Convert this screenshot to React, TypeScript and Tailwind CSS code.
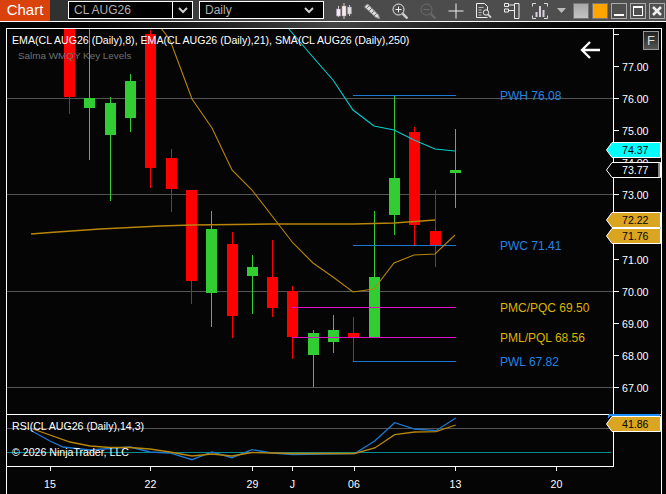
import React from 'react';

const FONT = "font-['Liberation_Sans',Arial,sans-serif]";

type Candle = { x: number; up: boolean; hi: number; lo: number; top: number; bot: number };

const candles: Candle[] = [
  { x: 69.5, up: false, hi: 29, lo: 114, top: 29, bot: 97 },
  { x: 89.5, up: true, hi: 29, lo: 160, top: 98, bot: 108 },
  { x: 110.5, up: true, hi: 97, lo: 201, top: 103, bot: 135 },
  { x: 130.5, up: true, hi: 74, lo: 132, top: 81, bot: 118 },
  { x: 150.5, up: false, hi: 30, lo: 188, top: 34, bot: 168 },
  { x: 171.5, up: false, hi: 149, lo: 212, top: 158, bot: 189 },
  { x: 191.5, up: false, hi: 190, lo: 304, top: 190, bot: 281 },
  { x: 211.5, up: true, hi: 211, lo: 327, top: 229, bot: 293 },
  { x: 232.5, up: false, hi: 232, lo: 338, top: 244, bot: 316 },
  { x: 252.5, up: true, hi: 255, lo: 314, top: 267, bot: 276 },
  { x: 272.5, up: false, hi: 240, lo: 317, top: 277, bot: 308 },
  { x: 292.5, up: false, hi: 286, lo: 359, top: 291, bot: 337 },
  { x: 313.5, up: true, hi: 330, lo: 387, top: 333, bot: 355 },
  { x: 333.5, up: true, hi: 315, lo: 353, top: 330, bot: 342 },
  { x: 353.5, up: false, hi: 317, lo: 361, top: 333, bot: 337 },
  { x: 374.5, up: true, hi: 211, lo: 337, top: 277, bot: 337 },
  { x: 394.5, up: true, hi: 96, lo: 235, top: 178, bot: 215 },
  { x: 414.5, up: false, hi: 127, lo: 245, top: 132, bot: 225 },
  { x: 435.5, up: false, hi: 190, lo: 267, top: 231, bot: 245 },
  { x: 455.5, up: true, hi: 129, lo: 208, top: 170, bot: 173 },
];

const ema21 = '288,28 312,56 333,80 353,110 374,126 394,130 414,140 435,149 455,151';
const ema8 =
  '161,28 170,40 192,99 212,128 232,170 252,190 293,243 313,263 333,277 353,292 374,289 394,263 414,255 435,254 455,235';
const sma = '31,234 50,232.5 100,229 160,226 192,225 270,224 353,224 394,223 435,220';
const rsiBlue =
  '30,430 50,441 63,447 90,450 130,447 150,452 170,453 192,459.7 212,452 232,457.7 252,449.7 272,453 293,454.5 354.7,453.5 374.7,441 394.7,422.7 414.7,429 436,430.7 455.7,418';
const rsiOrange =
  '33,429 70,442 90,446 110,447.5 130,447.5 150,449 170,452 192,456 212,454 232,456 252,452.5 273,453 293,453.5 354.7,453.5 374.7,448 394.7,434.7 414.7,432 436,431.7 455.7,425';

const priceTicks = [
  { label: '77.00', y: 66 },
  { label: '76.00', y: 98 },
  { label: '75.00', y: 130 },
  { label: '74.00', y: 162 },
  { label: '73.00', y: 194 },
  { label: '71.00', y: 259 },
  { label: '70.00', y: 291 },
  { label: '69.00', y: 323 },
  { label: '68.00', y: 355 },
  { label: '67.00', y: 387 },
];

const dateTicks = [
  { label: '15', x: 50 },
  { label: '22', x: 150.5 },
  { label: '29', x: 252.5 },
  { label: 'J', x: 292.5 },
  { label: '06', x: 354 },
  { label: '13', x: 455.5 },
  { label: '20', x: 556.5 },
];

const levels = [
  { text: 'PWH 76.08', y: 95.5, cls: 'text-[#2484e4]' },
  { text: 'PWC 71.41', y: 245.5, cls: 'text-[#2484e4]' },
  { text: 'PMC/PQC 69.50', y: 307.5, cls: 'text-[#dcb400]' },
  { text: 'PML/PQL 68.56', y: 337.5, cls: 'text-[#dcb400]' },
  { text: 'PWL 67.82', y: 361.5, cls: 'text-[#2484e4]' },
];

const tags = [
  { label: '74.37', top: 142, fill: '#00ffff', text: 'text-black' },
  { label: '73.77', top: 162, fill: '#000000', text: 'text-white' },
  { label: '72.22', top: 212, fill: '#daa520', text: 'text-black' },
  { label: '71.76', top: 228, fill: '#daa520', text: 'text-black' },
  { label: '41.86', top: 416, fill: '#daa520', text: 'text-black' },
];

function PriceTag({ label, top, fill, text }: { label: string; top: number; fill: string; text: string }) {
  return (
    <div className="absolute left-[606px] h-[16px] w-[55px]" style={{ top }}>
      <svg width="55" height="16" className="absolute inset-0">
        <polygon points="0.5,8 6,0.5 54.5,0.5 54.5,15.5 6,15.5" fill={fill} stroke="#ffffff" />
        {label === '73.77' && <rect x="52" y="1" width="2" height="14" fill="#888" />}
      </svg>
      <span className={`absolute left-[16px] top-0 text-[10.6px] leading-[17px] ${text}`}>{label}</span>
    </div>
  );
}

function ToolIcons() {
  return (
    <div className="flex items-center gap-[12px]">
      <svg width="16" height="16" viewBox="0 0 16 16">
        <path d="M2.500 3v11M8 0v16M13.500 2v11" stroke="#ccc" />
        <rect x="0.500" y="6" width="4" height="7" fill="#eee" stroke="#b090b0" strokeWidth="0.500" />
        <rect x="6" y="3" width="4" height="10" fill="#eee" stroke="#c09090" strokeWidth="0.500" />
        <rect x="11.500" y="4" width="4" height="7" fill="#ddd" stroke="#9090c0" strokeWidth="0.500" />
      </svg>
      <svg width="16" height="16" viewBox="0 0 16 16">
        <path d="M0.500 4 3.500 1l11 11 1 3.500-3.500-1z" fill="#ddd" stroke="#999" />
        <path d="M2.500 5.500l3-3M5 8l3-3M7.500 10.500l3-3M10 13l3-3" stroke="#777" />
      </svg>
      <svg width="16" height="16" viewBox="0 0 16 16" fill="none" stroke="#eee">
        <circle cx="6.500" cy="6.500" r="5.500" />
        <path d="M3.500 6.500h6M6.500 3.500v6" />
        <path d="M10.500 10.500l5 5" strokeWidth="2.500" stroke="#ccc" />
      </svg>
      <svg width="16" height="16" viewBox="0 0 16 16" fill="none" stroke="#6e6e6e">
        <circle cx="6.500" cy="6.500" r="5.500" />
        <path d="M3.500 6.500h6" />
        <path d="M10.500 10.500l5 5" strokeWidth="2.500" stroke="#666" />
      </svg>
      <svg width="16" height="16" viewBox="0 0 16 16" stroke="#eee">
        <path d="M8 0.500v15M0.500 8h15" />
      </svg>
      <svg width="16" height="16" viewBox="0 0 16 16" fill="none" stroke="#eee">
        <path d="M0.500 0.500h8l3 3v4M11.500 14.500h-11V0.500" />
        <path d="M2.500 4.500h5M2.500 7h3M2.500 9.500h3M2.500 12h3" stroke="#bbb" />
        <circle cx="10" cy="9.500" r="2.700" />
        <path d="M12 11.500l3 3" strokeWidth="1.800" stroke="#ccc" />
      </svg>
      <svg width="16" height="16" viewBox="0 0 16 16" fill="none" stroke="#eee">
        <path d="M0.500 0.500h4v3h-4zM0.500 6h4v3h-4z" />
        <path d="M4.500 2h6M4.500 7.500h6" />
        <path d="M10.500 0.500h4.500v15h-4.500z" />
      </svg>
      <svg width="16" height="16" viewBox="0 0 16 16" fill="none" stroke="#ddd">
        <path d="M4 0.500H0.500v3M12 0.500h3.500v3M4 15.500H0.500v-3M12 15.500h3.500v-3" />
        <path d="M4.500 14V9M8 14V3M11.500 14V7" strokeWidth="2" stroke="#d8d0e0" />
      </svg>
    </div>
  );
}

function TopBar() {
  return (
    <div className="flex h-[21px] items-stretch bg-gradient-to-r from-[#2c2c2c] via-[#4a4a4a] via-50% to-[#505050]">
      <div className="flex w-[50px] items-center justify-center bg-[#d9420b] text-[15px] text-white">Chart</div>
      <div className="ml-[18px] mt-[1px] flex h-[18px] w-[125px] items-stretch self-start border border-white bg-black text-[12px] text-[#b0b0b0]">
        <span className="flex-1 pl-[5px] leading-[16px]">CL AUG26</span>
        <span className="flex w-[20px] items-center justify-center border-l border-white">
          <svg width="10" height="7" viewBox="0 0 10 7" fill="none" stroke="#ccc" strokeWidth="2">
            <path d="M1 1l4 4 4-4" />
          </svg>
        </span>
      </div>
      <div className="ml-[6px] mt-[1px] flex h-[18px] w-[125px] items-center justify-between self-start border border-white bg-black pl-[5px] pr-[9px] text-[12px] text-[#b0b0b0]">
        <span>Daily</span>
        <svg width="10" height="7" viewBox="0 0 10 7" fill="none" stroke="#ccc" strokeWidth="2">
          <path d="M1 1l4 4 4-4" />
        </svg>
      </div>
      <div className="ml-auto flex items-center pr-[1px]">
        <ToolIcons />
        <svg width="9" height="5" viewBox="0 0 9 5" className="ml-[9px]">
          <path d="M0 0h9L4.500 5z" fill="#bbb" />
        </svg>
        <div className="ml-[7px] h-[16px] w-[16px] border border-[#777] bg-gradient-to-b from-[#a8a8a8] to-[#c4c4c4]" />
        <div className="ml-[3px] h-[16px] w-[16px] border border-[#777] bg-[#ffa500]" />
        <div className="ml-[3px] flex h-[16px] w-[16px] items-end justify-center border border-[#aaa] pb-[2px]">
          <div className="h-[2px] w-[10px] bg-white" />
        </div>
        <div className="ml-[3px] flex h-[16px] w-[16px] items-center justify-center border border-[#aaa]">
          <div className="h-[10px] w-[10px] border border-t-2 border-white" />
        </div>
        <div className="ml-[3px] flex h-[16px] w-[16px] items-center justify-center border border-[#aaa]">
          <svg width="10" height="10" viewBox="0 0 10 10" stroke="#eee" strokeWidth="2.500">
            <path d="M1 1l8 8M9 1l-8 8" />
          </svg>
        </div>
      </div>
    </div>
  );
}

function ChartCanvas() {
  return (
    <svg width="666" height="494" className="absolute left-0 top-0" shapeRendering="crispEdges">
      {[98.5, 194.5, 291.5, 387.5].map((y) => (
        <line key={y} x1="7" x2="613" y1={y} y2={y} stroke="#555" />
      ))}
      <line x1="7" x2="613" y1="428.500" y2="428.500" stroke="#555" />
      <line x1="7" x2="611" y1="452.500" y2="452.500" stroke="#008b8b" />

      {candles.map((c) => {
        const color = c.up ? '#32cd32' : '#ff0000';
        const wx = Math.floor(c.x);
        return (
          <g key={c.x}>
            <rect x={wx} y={c.hi} width="1" height={c.lo - c.hi} fill={color} />
            <rect x={wx - 5} y={c.top} width="11" height={c.bot - c.top} fill={color} />
          </g>
        );
      })}

      <line x1="353" x2="456" y1="95.500" y2="95.500" stroke="#1e78d2" />
      <line x1="353" x2="456" y1="245.500" y2="245.500" stroke="#1e78d2" />
      <line x1="292" x2="456" y1="307.500" y2="307.500" stroke="#e010c8" />
      <line x1="292" x2="456" y1="337.500" y2="337.500" stroke="#e010c8" />
      <line x1="353" x2="456" y1="361.500" y2="361.500" stroke="#1e78d2" />

      <g fill="none" shapeRendering="auto">
        <polyline points={ema21} stroke="#00cfcf" strokeWidth="1.100" />
        <polyline points={ema8} stroke="#b8860b" strokeWidth="1.100" />
        <polyline points={sma} stroke="#b8860b" strokeWidth="1.400" />
        <polyline points={rsiBlue} stroke="#1e78d2" strokeWidth="1.300" />
        <polyline points={rsiOrange} stroke="#b8860b" strokeWidth="1.300" />
        <path d="M600 50h-18M590 42l-8 8 8 8" stroke="#fff" strokeWidth="2.300" />
      </g>

      {/* frame and axes */}
      <path d="M6.500 494V28.500H661.500V494" fill="none" stroke="#fff" />
      <path d="M613.500 28V466.500H6M6 414.500H661" fill="none" stroke="#fff" />
      <path d="M613 34.500h6" stroke="#fff" />
      <path d="M608 417l3-2.500h49" fill="none" stroke="#1e90ff" strokeWidth="2" />
      {priceTicks.map((t) => (
        <line key={t.label} x1="613" x2="619" y1={t.y + 0.5} y2={t.y + 0.5} stroke="#fff" />
      ))}
      {dateTicks.map((t) => (
        <line key={t.label} x1={Math.floor(t.x) + 0.5} x2={Math.floor(t.x) + 0.5} y1="466" y2="471" stroke="#fff" />
      ))}
    </svg>
  );
}

export default function App() {
  return (
    <div className={`relative h-[494px] w-[666px] overflow-hidden bg-[#050505] ${FONT}`}>
      <TopBar />
      <div className="h-px bg-white" />
      <div className="h-[6px] bg-gradient-to-r from-black via-[#444] to-black" />
      <ChartCanvas />

      <div className="absolute left-[12px] top-[33px] whitespace-nowrap text-[10.6px] leading-[14px] text-white">
        EMA(CL AUG26 (Daily),8), EMA(CL AUG26 (Daily),21), SMA(CL AUG26 (Daily),250)
      </div>
      <div className="absolute left-[18px] top-[49px] whitespace-nowrap text-[9.9px] leading-[14px] text-[#707070]">
        Salma WMQY Key Levels
      </div>
      <div className="absolute left-[12px] top-[419px] whitespace-nowrap text-[10.6px] leading-[14px] text-white">
        RSI(CL AUG26 (Daily),14,3)
      </div>
      <div className="absolute left-[12px] top-[445px] whitespace-nowrap text-[10.6px] leading-[14px] text-white">
        © 2026 NinjaTrader, LLC
      </div>

      <div className="absolute left-[643px] top-[31px] flex h-[19px] w-[16px] items-center justify-center border border-[#999] bg-gradient-to-b from-[#222] to-[#555] text-[13px] text-[#ddd]">
        F
      </div>

      {levels.map((l) => (
        <div
          key={l.text}
          className={`absolute left-[500px] whitespace-nowrap text-[12px] leading-[14px] ${l.cls}`}
          style={{ top: l.y - 7 }}
        >
          {l.text}
        </div>
      ))}

      {priceTicks.map((t) => (
        <div key={t.label} className="absolute left-[622px] text-[10.6px] leading-[14px] text-white" style={{ top: t.y - 6 }}>
          {t.label}
        </div>
      ))}

      {dateTicks.map((t) => (
        <div
          key={t.label}
          className="absolute top-[477px] w-[30px] text-center text-[10.6px] leading-[14px] text-white"
          style={{ left: t.x - 15 }}
        >
          {t.label}
        </div>
      ))}

      {tags.map((t) => (
        <PriceTag key={t.label} {...t} />
      ))}
    </div>
  );
}
